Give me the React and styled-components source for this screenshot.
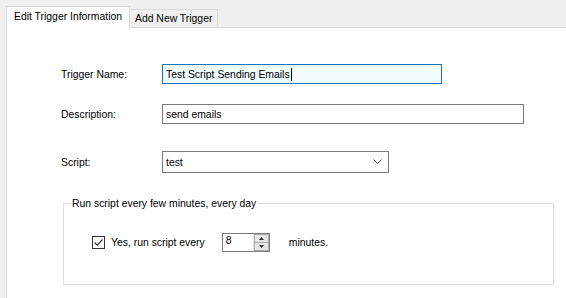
import React from 'react';
import styled, { createGlobalStyle } from 'styled-components';

const GlobalStyle = createGlobalStyle`
  html, body {
    margin: 0;
    padding: 0;
    background: #f0f0f0;
  }
  body {
    font-family: 'Liberation Sans', Arial, sans-serif;
    font-size: 10.4px;
    color: #000;
  }
`;

const Window = styled.div`
  width: 566px;
  height: 298px;
  overflow: hidden;
  box-sizing: border-box;
  padding: 6px 0 0 6px;
  display: flex;
  flex-direction: column;
  background: #f0f0f0;
`;

const TabStrip = styled.div`
  display: flex;
  align-items: flex-end;
  height: 21px;
`;

const Tab = styled.div`
  position: relative;
  z-index: ${p => (p.active ? 2 : 1)};
  box-sizing: border-box;
  height: ${p => (p.active ? '22px' : '18px')};
  margin-bottom: ${p => (p.active ? '-1px' : '0')};
  margin-left: ${p => (p.active ? '0' : '-1px')};
  width: ${p => p.width}px;
  border: 1px solid #d9d9d9;
  border-bottom: none;
  background: ${p => (p.active ? '#fff' : '#f0f0f0')};
  display: flex;
  align-items: center;
  padding-left: ${p => (p.active ? '7px' : '5px')};
  padding-bottom: ${p => (p.active ? '2px' : '0')};
  white-space: nowrap;
`;

const Panel = styled.div`
  flex: 1;
  background: #fff;
  border-top: 1px solid #d9d9d9;
  border-left: 1px solid #d9d9d9;
  padding-top: 36px;
`;

const Field = styled.div`
  display: grid;
  grid-template-columns: 101px auto;
  align-items: center;
  padding-left: 54px;
  margin-top: ${p => p.gap || 0}px;
`;

const Label = styled.span`
  white-space: nowrap;
`;

const TextBox = styled.div`
  box-sizing: border-box;
  width: ${p => p.width}px;
  height: 20px;
  border: 1px solid ${p => (p.focused ? '#1873b8' : '#7a7a7a')};
  background: ${p => (p.focused ? '#f2fdff' : '#fff')};
  display: flex;
  align-items: center;
  padding-left: 3px;
  white-space: nowrap;
`;

const Caret = styled.span`
  display: inline-block;
  width: 1px;
  height: 13px;
  background: #000;
  margin-left: 1px;
`;

const Select = styled(TextBox)`
  height: 22px;
  justify-content: space-between;
  padding-right: 6px;
`;

const GroupBox = styled.fieldset`
  box-sizing: border-box;
  width: 491px;
  height: 88px;
  margin: 24px 0 0 56px;
  padding: 0 0 0 7px;
  border: 1px solid #dcdcdc;
  min-width: 0;
`;

const Legend = styled.legend`
  padding: 0 1px;
  line-height: 13px;
  white-space: nowrap;
`;

const OptionRow = styled.div`
  display: flex;
  align-items: center;
  margin: 23px 0 0 21px;
`;

const CheckBox = styled.div`
  box-sizing: border-box;
  width: 13px;
  height: 13px;
  border: 1px solid #333;
  background: #fff;
  display: flex;
  align-items: center;
  justify-content: center;
  margin-right: 6px;
`;

const Spinner = styled.div`
  box-sizing: border-box;
  width: 48px;
  height: 19px;
  margin-left: 17px;
  border: 1px solid #7a7a7a;
  display: flex;
  background: #fff;
`;

const SpinValue = styled.span`
  flex: 1;
  padding: 1px 0 0 3px;
`;

const SpinButtons = styled.div`
  width: 15px;
  display: flex;
  flex-direction: column;
  border-left: 1px solid #e3e3e3;
`;

const SpinButton = styled.div`
  flex: 1;
  background: #e6e6e6;
  border: 1px solid #adadad;
  display: flex;
  align-items: center;
  justify-content: center;
  & + & {
    border-top: none;
  }
`;

const Units = styled.span`
  margin-left: 19px;
`;

const Arrow = ({ up }) => (
  <svg width="5" height="3" viewBox="0 0 5 3">
    <path d={up ? 'M0 3 L2.5 0 L5 3 Z' : 'M0 0 L2.5 3 L5 0 Z'} fill="#333" />
  </svg>
);

const Chevron = () => (
  <svg width="9" height="6" viewBox="0 0 9 6">
    <path d="M0.5 0.5 L4.5 4.5 L8.5 0.5" fill="none" stroke="#555" strokeWidth="1" />
  </svg>
);

const Check = () => (
  <svg width="11" height="11" viewBox="0 0 11 11">
    <path d="M1.5 5.5 L4.2 8.2 L9.5 2.5" fill="none" stroke="#333" strokeWidth="1.2" />
  </svg>
);

const App = () => (
  <>
    <GlobalStyle />
    <Window>
      <TabStrip>
        <Tab active width={124}>Edit Trigger Information</Tab>
        <Tab width={89}>Add New Trigger</Tab>
      </TabStrip>
      <Panel>
        <Field>
          <Label>Trigger Name:</Label>
          <TextBox focused width={280}>
            Test Script Sending Emails<Caret />
          </TextBox>
        </Field>
        <Field gap={20}>
          <Label>Description:</Label>
          <TextBox width={362}>send emails</TextBox>
        </Field>
        <Field gap={27}>
          <Label>Script:</Label>
          <Select width={227}>
            test
            <Chevron />
          </Select>
        </Field>
        <GroupBox>
          <Legend>Run script every few minutes, every day</Legend>
          <OptionRow>
            <CheckBox>
              <Check />
            </CheckBox>
            Yes, run script every
            <Spinner>
              <SpinValue>8</SpinValue>
              <SpinButtons>
                <SpinButton>
                  <Arrow up />
                </SpinButton>
                <SpinButton>
                  <Arrow />
                </SpinButton>
              </SpinButtons>
            </Spinner>
            <Units>minutes.</Units>
          </OptionRow>
        </GroupBox>
      </Panel>
    </Window>
  </>
);

export default App;
